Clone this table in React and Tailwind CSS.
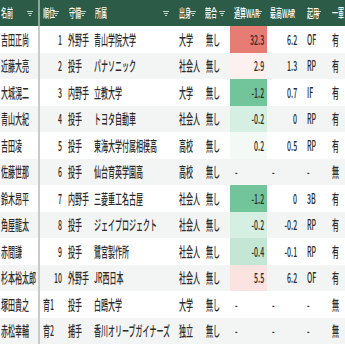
import React from 'react';

const widths = ['w-[40px]', 'w-[24px]', 'w-[27px]', 'w-[83px]', 'w-[27px]', 'w-[29px]', 'w-[37px]', 'w-[33px]', 'w-[26px]', 'w-[30px]'];
const padL = ['pl-[1px]', 'pl-[3px]', 'pl-[4px]', 'pl-[3px]', 'pl-[5px]', 'pl-[5px]', 'pl-[5px]', 'pl-[5px]', 'pl-[7px]', 'pl-[6px]'];
const headPadL = ['pl-[1px]', 'pl-[3px]', 'pl-[5px]', 'pl-[4px]', 'pl-[5px]', 'pl-[4px]', 'pl-[4px]', 'pl-[3px]', 'pl-[7px]', 'pl-[6px]'];
const padR = ['', 'pr-[2px]', '', '', '', '', 'pr-[3px]', 'pr-[3px]', '', ''];

const headers = ['名前', '順位', '守備', '所属', '出身', '競合', '通算WAR', '最高WAR', '起用', '一軍'];

const rows = [
    ['吉田正尚', '1', '外野手', '青山学院大学', '大学', '無し', '32.3', '6.2', 'OF', '有'],
    ['近藤大亮', '2', '投手', 'パナソニック', '社会人', '無し', '2.9', '1.3', 'RP', '有'],
    ['大城滉二', '3', '内野手', '立教大学', '大学', '無し', '-1.2', '0.7', 'IF', '有'],
    ['青山大紀', '4', '投手', 'トヨタ自動車', '社会人', '無し', '-0.2', '0', 'RP', '有'],
    ['吉田凌', '5', '投手', '東海大学付属相模高', '高校', '無し', '0.2', '0.5', 'RP', '有'],
    ['佐藤世那', '6', '投手', '仙台育英学園高', '高校', '無し', '-', '-', '-', '無'],
    ['鈴木昂平', '7', '内野手', '三菱重工名古屋', '社会人', '無し', '-1.2', '0', '3B', '有'],
    ['角屋龍太', '8', '投手', 'ジェイプロジェクト', '社会人', '無し', '-0.2', '-0.2', 'RP', '有'],
    ['赤間謙', '9', '投手', '鷺宮製作所', '社会人', '無し', '-0.4', '-0.1', 'RP', '有'],
    ['杉本裕太郎', '10', '外野手', 'JR西日本', '社会人', '無し', '5.5', '6.2', 'OF', '有'],
    ['塚田貴之', '育1', '投手', '白鴎大学', '大学', '無し', '-', '-', '-', '無'],
    ['赤松幸輔', '育2', '捕手', '香川オリーブガイナーズ', '独立', '無し', '-', '-', '-', '無'],
];

const warColors = {
    '32.3': 'bg-[#e67c73]',
    '2.9': 'bg-[#fdf0ef]',
    '-1.2': 'bg-[#72c59b]',
    '-0.2': 'bg-[#d5efe2]',
    '0.2': 'bg-[#f3faf6]',
    '-0.4': 'bg-[#c3e7d4]',
    '5.5': 'bg-[#fbe3e1]',
};

const isNumber = (v) => /^-?\d+(\.\d+)?$/.test(v);

const Filter = () => (
    <svg width="6" height="5" viewBox="0 0 6 5" className="shrink-0">
        <path d="M0 0.5H6M1 2.5H5M2 4.5H4" stroke="#c2d3ca" strokeWidth="1" />
    </svg>
);

const App = () => {
    return (
        <div className="w-[345px] h-[345px] overflow-hidden bg-white text-[#2b2b2b]" style={{ fontFamily: '"Noto Sans CJK JP", "Noto Sans", sans-serif' }}>
            <div className="flex h-[26px] bg-[#2c5c47] text-white w-max">
                {headers.map((h, i) => (
                    <div
                        key={h}
                        className={`${widths[i]} ${headPadL[i]} pr-[5px] flex items-center justify-between overflow-hidden shrink-0 ${i === 0 ? 'border-r-2 border-[#8fa79b]' : ''}`}
                    >
                        <span className="inline-block whitespace-nowrap origin-left scale-x-50 text-[12px] font-medium w-0">{h}</span>
                        <Filter />
                    </div>
                ))}
            </div>

            {rows.map((row, r) => (
                <div key={r} className={`flex h-[26.5px] w-max ${r % 2 === 1 ? 'bg-[#f3f4f4]' : 'bg-white'}`}>
                    {row.map((v, i) => {
                        const right = (i === 1 || i === 6 || i === 7) && isNumber(v);
                        const color = i === 6 ? warColors[v] || '' : '';
                        return (
                            <div
                                key={i}
                                className={`${widths[i]} shrink-0 flex items-center overflow-hidden ${color} ${right ? `justify-end ${padR[i]}` : padL[i]} ${i === 0 ? 'border-r-2 border-[#c9cbca]' : ''}`}
                            >
                                <span className={`inline-block whitespace-nowrap text-[14px] font-medium scale-x-50 ${right ? 'origin-right' : 'origin-left'}`}>
                                    {v}
                                </span>
                            </div>
                        );
                    })}
                </div>
            ))}
        </div>
    );
};

export default App;
